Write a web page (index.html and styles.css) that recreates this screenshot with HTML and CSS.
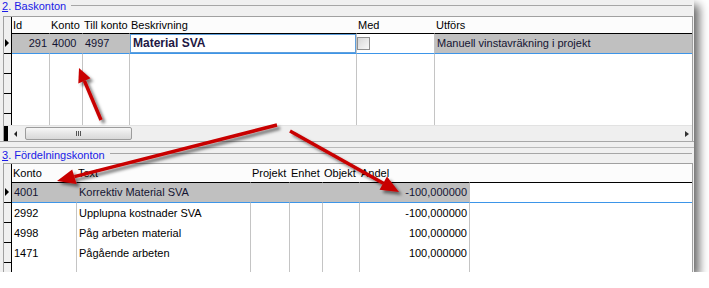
FILE: index.html
```html
<!DOCTYPE html>
<html lang="sv">
<head>
    <meta charset="UTF-8">
    <title>Baskonton och fördelningskonton</title>
    <link rel="stylesheet" href="styles.css">
</head>
<body>

<div class="window">
    <div class="caption"><span class="title"><u>2</u>. Baskonton</span><span class="rule"></span></div>

    <div class="grid bas">
        <div class="row head">
            <div class="cell ind"></div>
            <div class="cell">Id</div>
            <div class="cell">Konto</div>
            <div class="cell">Till konto</div>
            <div class="cell">Beskrivning</div>
            <div class="cell">Med</div>
            <div class="cell">Utförs</div>
        </div>
        <div class="row current">
            <div class="cell ind"><span class="pointer"></span></div>
            <div class="cell num">291</div>
            <div class="cell">4000</div>
            <div class="cell">4997</div>
            <div class="cell editor">Material SVA</div>
            <div class="cell blank"><span class="checkbox"></span></div>
            <div class="cell">Manuell vinstavräkning i projekt</div>
        </div>
        <div class="row"><div class="cell ind"></div><div class="cell"></div><div class="cell"></div><div class="cell"></div><div class="cell"></div><div class="cell"></div><div class="cell"></div></div>
        <div class="row"><div class="cell ind"></div><div class="cell"></div><div class="cell"></div><div class="cell"></div><div class="cell"></div><div class="cell"></div><div class="cell"></div></div>
        <div class="row"><div class="cell ind"></div><div class="cell"></div><div class="cell"></div><div class="cell"></div><div class="cell"></div><div class="cell"></div><div class="cell"></div></div>
        <div class="row filler"><div class="cell ind"></div><div class="cell"></div><div class="cell"></div><div class="cell"></div><div class="cell"></div><div class="cell"></div><div class="cell"></div></div>

        <div class="hscroll">
            <span class="scroll-stub"></span>
            <span class="arrow left"></span>
            <span class="thumb"><span class="grip"></span></span>
            <span class="arrow right"></span>
        </div>
    </div>

    <div class="splitter"></div>

    <div class="caption second"><span class="title"><u>3</u>. Fördelningskonton</span><span class="rule"></span></div>

    <div class="grid fordel">
        <div class="row head">
            <div class="cell ind"></div>
            <div class="cell">Konto</div>
            <div class="cell">Text</div>
            <div class="cell">Projekt</div>
            <div class="cell">Enhet</div>
            <div class="cell">Objekt</div>
            <div class="cell">Andel</div>
            <div class="cell"></div>
        </div>
        <div class="row current">
            <div class="cell ind"><span class="pointer"></span></div>
            <div class="cell">4001</div>
            <div class="cell">Korrektiv Material SVA</div>
            <div class="cell"></div>
            <div class="cell"></div>
            <div class="cell"></div>
            <div class="cell num">-100,000000</div>
            <div class="cell blank"></div>
        </div>
        <div class="row">
            <div class="cell ind"></div>
            <div class="cell">2992</div>
            <div class="cell">Upplupna kostnader SVA</div>
            <div class="cell"></div>
            <div class="cell"></div>
            <div class="cell"></div>
            <div class="cell num">-100,000000</div>
            <div class="cell"></div>
        </div>
        <div class="row">
            <div class="cell ind"></div>
            <div class="cell">4998</div>
            <div class="cell">Påg arbeten material</div>
            <div class="cell"></div>
            <div class="cell"></div>
            <div class="cell"></div>
            <div class="cell num">100,000000</div>
            <div class="cell"></div>
        </div>
        <div class="row">
            <div class="cell ind"></div>
            <div class="cell">1471</div>
            <div class="cell">Pågående arbeten</div>
            <div class="cell"></div>
            <div class="cell"></div>
            <div class="cell"></div>
            <div class="cell num">100,000000</div>
            <div class="cell"></div>
        </div>
        <div class="row filler"><div class="cell ind"></div><div class="cell"></div><div class="cell"></div><div class="cell"></div><div class="cell"></div><div class="cell"></div><div class="cell"></div><div class="cell"></div></div>
    </div>

    <!-- red annotation arrows drawn over the screenshot -->
    <svg class="arrows" width="694" height="272" viewBox="0 0 694 272">
        <defs>
            <filter id="shade" x="-20%" y="-20%" width="140%" height="140%">
                <feDropShadow dx="3" dy="3" stdDeviation="1.8" flood-color="#000" flood-opacity="0.5"/>
            </filter>
        </defs>
        <g filter="url(#shade)" fill="#c80000" stroke="#c80000">
            <line x1="101" y1="120" x2="84.4" y2="80.9" stroke-width="3.5"/>
            <polygon points="79,68 90.5,78.3 78.3,83.5" stroke="none"/>

            <line x1="277" y1="125" x2="74.4" y2="176.6" stroke-width="3.5"/>
            <polygon points="57,181 72.2,169.4 76.6,184" stroke="none"/>

            <line x1="290" y1="131" x2="383.3" y2="183.2" stroke-width="3.5"/>
            <polygon points="399,192 387,176.6 379.5,189.8" stroke="none"/>
        </g>
    </svg>
</div>

</body>
</html>
```

FILE: styles.css
```css
body {
    margin: 0;
    background: #fff;
    font-family: "Liberation Sans", Arial, sans-serif;
    font-size: 11px;
    color: #000;
}
.window {
    position: relative;
    width: 694px;
    height: 272px;
    background: #f0f0f0;
    box-shadow: 5px 5px 9px rgba(0, 0, 0, 0.6);
    overflow: hidden;
    display: flex;
    flex-direction: column;
}

/* group captions */
.caption {
    display: flex;
    align-items: flex-start;
    height: 16px;
    flex: none;
}
.caption.second {
    height: 15px;
}
.title {
    padding: 0 0 0 2px;
    line-height: 12px;
    color: #1a1ae6;
    white-space: nowrap;
}
.caption.second .title {
    padding-top: 1px;
}
.title u {
    text-decoration: underline;
}
.rule {
    flex: 1;
    margin: 5px 2px 0 5px;
    border-top: 1px solid #a6a6a6;
}

/* grids */
.grid {
    margin: 0 1px 0 3px;
    border: 1px solid #a0a0a0;
    border-bottom: none;
    background: #fff;
    display: flex;
    flex-direction: column;
}
.grid.bas {
    height: 124px;
    flex: none;
}
.grid.fordel {
    flex: 1;
}
.row {
    display: grid;
    height: 20px;
    flex: none;
}
.bas .row {
    grid-template-columns: 8px 38px 33px 47px 227px 78px 1fr;
}
.fordel .row {
    grid-template-columns: 8px 65px 174px 39px 33px 37px 110px 1fr;
}
.cell {
    box-sizing: border-box;
    border-right: 1px solid #c4c4c4;
    padding: 0 2px;
    line-height: 20px;
    white-space: nowrap;
    overflow: hidden;
}
.cell:last-child {
    border-right: none;
}
.cell.num {
    text-align: right;
}
.cell.ind {
    padding: 0;
    background: #f0f0f0;
    border-right: 1px solid #000;
    border-bottom: 1px solid #000;
    display: flex;
    align-items: center;
}

.row.head {
    height: 16px;
    background: #fcfcfc;
}
.fordel .row.head {
    height: 18px;
}
.row.head .cell {
    border-right-color: transparent;
    padding: 0 0 0 1px;
    line-height: 17px;
}
.fordel .row.head .cell {
    line-height: 19px;
}
.row.head .cell.ind {
    border-right-color: #000;
    border-bottom: none;
}

.row.current {
    height: 21px;
}
.row.current .cell {
    border-top: 1px solid #000;
    border-bottom: 1px solid #3d95e8;
    background: #c0c0c0;
    border-right-color: #c0c0c0;
    line-height: 19px;
    color: #141432;
}
.row.current .cell.ind {
    border-top: none;
    border-bottom: 1px solid #000;
    background: #f0f0f0;
    border-right-color: #000;
}
.row.current .cell.editor {
    background: #fff;
    border-right-color: #c4c4c4;
    box-shadow: inset 0 0 0 1px #5f9fdc;
    font-weight: bold;
    font-size: 12px;
    color: #221844;
    padding-left: 3px;
}
.row.current .cell.blank {
    background: #fff;
    border-right-color: #c4c4c4;
}
.fordel .row.current .cell.blank {
    border-right: none;
}
.pointer {
    margin-left: 1px;
    width: 0;
    height: 0;
    border-left: 4px solid #000;
    border-top: 4px solid transparent;
    border-bottom: 4px solid transparent;
}
.checkbox {
    display: block;
    width: 13px;
    height: 13px;
    box-sizing: border-box;
    margin: 3px 0 0 -2px;
    border: 1px solid #8f8f8f;
    background: linear-gradient(135deg, #d6d6d6, #f8f8f8);
}

.row.filler {
    flex: 1;
    height: auto;
}
.row.filler .cell.ind {
    border-bottom: none;
}

/* horizontal scrollbar */
.hscroll {
    height: 16px;
    flex: none;
    background: #efefef;
    border-top: 1px solid #e2e2e2;
    box-sizing: border-box;
    display: flex;
    align-items: center;
}
.scroll-stub {
    width: 4px;
    height: 15px;
    background: #000;
}
.arrow {
    width: 0;
    height: 0;
    border-top: 3px solid transparent;
    border-bottom: 3px solid transparent;
}
.arrow.left {
    margin-left: 6px;
    border-right: 3px solid #222;
}
.arrow.right {
    margin-left: auto;
    margin-right: 3px;
    border-left: 4px solid #333;
}
.thumb {
    margin-left: 8px;
    width: 107px;
    height: 13px;
    box-sizing: border-box;
    border: 1px solid #9c9c9c;
    border-radius: 2px;
    background: linear-gradient(#f7f7f7, #e6e6e6 50%, #d8d8d8);
    display: flex;
    align-items: center;
    justify-content: center;
}
.grip {
    width: 5px;
    height: 5px;
    background: repeating-linear-gradient(90deg, #555 0 1px, transparent 1px 2px);
}

.splitter {
    height: 7px;
    flex: none;
    box-sizing: border-box;
    border-top: 1px solid #a8a8a8;
    border-bottom: 1px solid #bababa;
}

.arrows {
    position: absolute;
    left: 0;
    top: 0;
    pointer-events: none;
}
```
